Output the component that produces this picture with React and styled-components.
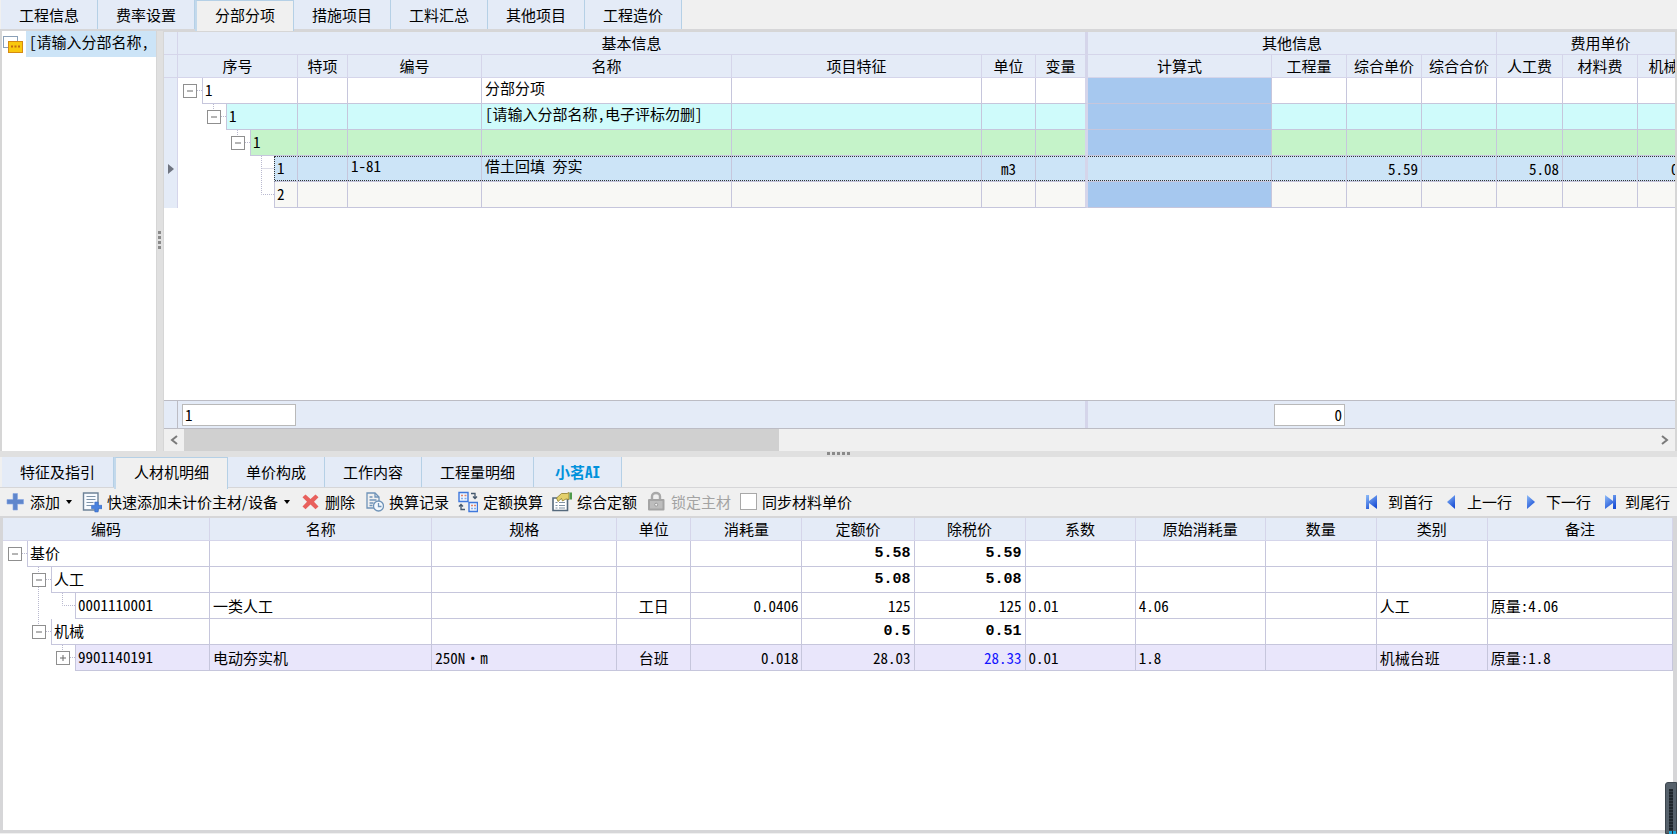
import React, { useState } from "react";
import styled, { createGlobalStyle, css } from "styled-components";

const GlobalStyle = createGlobalStyle`
  * {
    box-sizing: border-box;
  }
  body {
    margin: 0;
    background: #f0f0f0;
    color: #000000;
    font-family: "Noto Sans CJK SC", "Liberation Sans", sans-serif;
    font-size: 15px;
    line-height: 20px;
    overflow: hidden;
  }
  button,
  input {
    font: inherit;
    color: inherit;
  }
`;

const Page = styled.div`
  display: flex;
  flex-direction: column;
  height: 100vh;
`;

/* ---------- tabs ---------- */

const TabBar = styled.div`
  display: flex;
  height: 31px;
  padding-left: ${(p) => (p.$indent ? "2px" : "1px")};
  border-bottom: ${(p) => (p.$indent ? "1px" : "2px")} solid #d6d6d8;
`;

const Tab = styled.button`
  padding: 0 18px;
  border: none;
  border-right: 1px solid #b5d0e6;
  background: #e4ebf7;
  white-space: nowrap;
  font-feature-settings: "hwid";
  ${(p) =>
    p.$active &&
    css`
      padding-bottom: 3px;
      border-left: 2px solid #c3d9ec;
      border-top: 1px solid #b5d0e6;
      background: #f0f0f0;
      margin-bottom: -2px;
    `}
  ${(p) =>
    p.$brand &&
    css`
      min-width: 88px;
      color: #0091dc;
      font-weight: bold;
    `}
`;

/* ---------- upper pane ---------- */

const UpperPane = styled.div`
  flex: 420 1 0;
  min-height: 0;
  display: flex;
`;

const SectionTree = styled.div`
  width: 157px;
  flex: none;
  background: #ffffff;
  border-left: 2px solid #d6d6d6;
  border-right: 1px solid #d6d6d6;
`;

const SectionItem = styled.div`
  display: flex;
  height: 26px;
`;

const SectionIcon = styled.svg`
  flex: none;
  width: 24px;
  height: 26px;
`;

const SectionLabel = styled.div`
  flex: 1;
  padding: 1px 0 0 3px;
  overflow: hidden;
  white-space: nowrap;
  background: #cce4f7;
  font-feature-settings: "hwid";
`;

const VSplitter = styled.div`
  flex: none;
  width: 6px;
  display: flex;
  align-items: center;
  justify-content: center;
  background: #e0e0e0;
`;

const HSplitter = styled.div`
  flex: none;
  height: 6px;
  display: flex;
  align-items: center;
  justify-content: center;
  background: #e0e0e0;
`;

const GridPane = styled.div`
  flex: 1;
  min-width: 0;
  display: flex;
  flex-direction: column;
  background: #ffffff;
  border: solid #d6d6d6;
  border-width: 1px 2px 0 1px;
`;

const GridScroll = styled.div`
  flex: 1;
  min-height: 0;
  overflow: hidden;
`;

const Table = styled.table`
  width: ${(p) => p.$width || "100%"};
  table-layout: fixed;
  border-collapse: separate;
  border-spacing: 0;
  font-feature-settings: "hwid";
`;

const Th = styled.th`
  height: 23px;
  padding: 0;
  border-right: 1px solid #d5d5ea;
  border-bottom: 1px solid #d5d5ea;
  background: #e4ebf7;
  font-weight: normal;
  overflow: hidden;
  white-space: nowrap;
  ${(p) => p.$frozen && "border-right: 3px solid #d5d5ea;"}
`;

const focusLines = css`
  background-image: repeating-linear-gradient(
      90deg,
      #333333 0 1px,
      transparent 1px 2px
    ),
    repeating-linear-gradient(90deg, #333333 0 1px, transparent 1px 2px);
  background-size: 100% 1px;
  background-position: top, bottom;
  background-repeat: no-repeat;
`;

const Td = styled.td`
  height: 26px;
  padding: 0 3px;
  border-right: 1px solid #c6c6dc;
  border-bottom: 1px solid #c6c6dc;
  background-color: ${(p) => p.$bg || "#ffffff"};
  text-align: ${(p) => p.$align || "left"};
  vertical-align: ${(p) => (p.$top ? "top" : "middle")};
  color: ${(p) => p.$color || "inherit"};
  overflow: hidden;
  white-space: nowrap;
  ${(p) =>
    p.$bold &&
    css`
      font-family: "Liberation Mono", monospace;
      font-weight: bold;
    `}
  ${(p) => p.$frozen && "border-right: 3px solid #d5d5ea;"}
  ${(p) => p.$focused && focusLines}
`;

const Indicator = styled.td`
  padding: 0;
  text-align: center;
  line-height: 0;
  background: #e4ebf7;
  border-right: 1px solid #d5d5ea;
`;

const TreeTd = styled.td`
  height: 26px;
  padding: 0;
`;

const TreeRow = styled.div`
  display: flex;
  height: 26px;
`;

const TreeValue = styled.div`
  flex: 1;
  padding: 2px 2px 0;
  background-color: ${(p) => p.$bg || "#ffffff"};
  border: solid #c6c6dc;
  border-width: 0 1px 1px 1px;
  ${(p) => p.$focused && "border-left: 1px dotted #333333;"}
  ${(p) => p.$focused && focusLines}
`;

const Toggle = styled.button`
  flex: none;
  width: 24px;
  height: 26px;
  padding: 0;
  border: none;
  background: none;
  line-height: 0;
`;

const GuideSvg = styled.svg`
  flex: none;
  width: 24px;
  height: 26px;
`;

const FooterBar = styled.div`
  flex: none;
  display: flex;
  height: 29px;
  background: #e4ebf7;
  border-top: 1px solid #bcbcc4;
  border-bottom: 1px solid #bcbcc4;
`;

const FooterMark = styled.div`
  flex: none;
  width: 14px;
  border-right: 1px solid #bcbcc4;
`;

const FooterFixed = styled.div`
  flex: none;
  width: 910px;
  padding: 3px 4px;
  border-right: 3px solid #d5d5ea;
`;

const FooterRest = styled.div`
  flex: 1;
  padding: 3px 0 3px 186px;
`;

const FooterInput = styled.input`
  display: block;
  width: ${(p) => p.$width};
  height: 22px;
  padding: 0 2px 2px;
  border: 1px solid #b9b9b9;
  background: #ffffff;
  text-align: ${(p) => p.$align || "left"};
  font-feature-settings: "hwid";
`;

const ScrollBar = styled.div`
  flex: none;
  display: flex;
  height: 22px;
  background: #f0f0f0;
`;

const ScrollArrow = styled.button`
  flex: none;
  width: 20px;
  padding: 0;
  border: none;
  background: none;
  line-height: 0;
`;

const ScrollTrack = styled.div`
  flex: 1;
`;

const ScrollThumb = styled.div`
  width: calc(100% * 595 / 1471);
  height: 100%;
  background: #d0d0d0;
`;

/* ---------- lower pane ---------- */

const LowerPane = styled.div`
  flex: 377 1 0;
  min-height: 0;
  display: flex;
  flex-direction: column;
`;

const ToolBar = styled.div`
  flex: none;
  display: flex;
  align-items: center;
  gap: 9px;
  height: 28px;
  padding: 0 7px 1px 5px;
  white-space: nowrap;
`;

const ToolButton = styled.button`
  display: flex;
  align-items: center;
  gap: 5px;
  padding: 0;
  border: none;
  background: none;
  &:disabled {
    color: #a3a3a3;
  }
`;

const ToolIcon = styled.svg`
  flex: none;
  width: 20px;
  height: 22px;
`;

const CheckLabel = styled.label`
  display: flex;
  align-items: center;
  gap: 5px;
`;

const CheckBox = styled.input`
  appearance: none;
  width: 17px;
  height: 17px;
  margin: 0;
  border: 1px solid #a8a8a8;
  background: #ffffff;
  &:checked {
    background: #3f73d8;
  }
`;

const Navigator = styled.div`
  display: flex;
  gap: 10px;
  margin-left: auto;
`;

const NavButton = styled.button`
  display: flex;
  align-items: center;
  gap: 8px;
  padding: 0;
  border: none;
  background: none;
`;

const DetailPane = styled.div`
  flex: 1;
  min-height: 0;
  overflow: hidden;
  margin-bottom: 1px;
  background: #ffffff;
  border: solid #d6d6d8;
  border-width: 2px 4px 3px 3px;
`;

const FloatingWidget = styled.div`
  position: fixed;
  right: 0;
  bottom: 0;
  width: 12px;
  height: 52px;
  padding: 6px 3px 0;
  border-radius: 3px 0 0 0;
  background: #56616b;
  border: 1px solid #3d464e;
`;

const WidgetSlot = styled.div`
  height: 45px;
  background: repeating-linear-gradient(#1f262c 0 2px, #333c44 2px 3px);
  border-bottom: 3px dotted #22a7d8;
`;

/* ---------- icons ---------- */

const Dots = ({ vertical }) => (
  <svg width={vertical ? 4 : 24} height={vertical ? 20 : 4} fill="#8a8a8a">
    {[0, 1, 2, 3, 4].slice(vertical ? 1 : 0).map((n) => (
      <rect
        key={n}
        x={vertical ? 0 : n * 5}
        y={vertical ? (n - 1) * 5 : 0}
        width="3"
        height="3"
      />
    ))}
  </svg>
);

const Guide = ({ type }) => (
  <GuideSvg
    viewBox="0 0 24 26"
    fill="none"
    stroke="#b9b9cf"
    strokeDasharray="1 1"
    aria-hidden="true"
  >
    {type === "line" && <path d="M11.5 0V26" />}
    {type === "tee" && <path d="M11.5 0V26M11.5 12.5H24" />}
    {type === "elbow" && <path d="M11.5 0V12.5H24" />}
  </GuideSvg>
);

const ToggleIcon = ({ type }) => (
  <svg width="24" height="26" viewBox="0 0 24 26" fill="none">
    <g stroke="#b9b9cf" strokeDasharray="1 1">
      <path d="M19 12.5H24" />
      {type !== "root" && <path d="M11.5 0V6" />}
      {type === "open-more" && <path d="M11.5 20V26" />}
    </g>
    <rect x="5.5" y="6.5" width="13" height="13" fill="#fff" stroke="#8f8f8f" />
    <path d="M9 13H15" stroke="#6a6a6a" />
    {type === "closed" && <path d="M12 10V16" stroke="#6a6a6a" />}
  </svg>
);

const Caret = () => (
  <svg width="8" height="6" viewBox="0 0 8 6">
    <path d="M1 1H7L4 5Z" fill="#000" />
  </svg>
);

const AddIcon = () => (
  <ToolIcon viewBox="0 0 20 22">
    <path
      d="M8 2.5h4.500v6h6v4.500h-6v6H8v-6H2V8.500h6z"
      fill="#5f86cc"
      stroke="#86a6e2"
      strokeWidth="0.6"
    />
  </ToolIcon>
);

const QuickAddIcon = () => (
  <ToolIcon viewBox="0 0 20 22">
    <path d="M1.500 2h14.500v17h-14.500z" fill="#f8fbff" stroke="#6d8298" strokeWidth="1.400" />
    <path
      d="M4.500 5.5h9M4.500 8.5h9M4.500 11.5h7M4.500 14.5h5"
      stroke="#7e93a8"
      strokeWidth="1.200"
    />
    <path
      d="M12.800 11h3.400v3.300H20v3.400h-3.800V21h-3.400v-3.300H9.500v-3.400h3.300z"
      fill="#4a82de"
      stroke="#2f62bd"
      strokeWidth="0.500"
    />
  </ToolIcon>
);

const DeleteIcon = () => (
  <ToolIcon viewBox="0 0 20 22">
    <path
      d="M5.500 3.500 10.500 8 15.500 3.500l3 2.800-4.500 4.400 4.500 4.700-3 2.800L10.500 13.500 5.500 18.200l-3-2.800 4.500-4.700L2.500 6.300z"
      fill="#e8605c"
    />
  </ToolIcon>
);

const RecordIcon = () => (
  <ToolIcon viewBox="0 0 20 22" fill="none" stroke="#6f93b8" strokeWidth="1.3">
    <path d="M10 17H3V2h8l4 4v5" />
    <path d="M11 2v4h4M5.500 6h3M5.500 9h7M5.500 12h4M5.500 14.500h3" />
    <circle cx="14.500" cy="15" r="5" fill="#f3f8fd" />
    <path d="M14.500 12v3.500h3" />
  </ToolIcon>
);

const ConvertIcon = () => (
  <ToolIcon viewBox="0 0 20 22" fill="none">
    <path
      d="M1 1.500h9v9H1zM11 11.500h8.500v9H11z"
      fill="#eef5ff"
      stroke="#3f78dc"
      strokeWidth="1.400"
    />
    <path
      d="M3 4.500h2M6.500 4.500h2M13 14.500h2M16 14.500h2"
      stroke="#e2856a"
      strokeWidth="1.300"
    />
    <path
      d="M3 7.500h2M6.500 7.500h2M13 17.500h2M16 17.500h2"
      stroke="#86aee8"
      strokeWidth="1.300"
    />
    <path
      d="M13 2.500h4v5M15 5.500l2 2 2-2M7 18.500H3V13.500M1 15.500l2-2 2 2"
      stroke="#44586e"
      strokeWidth="1.300"
    />
  </ToolIcon>
);

const QuotaIcon = () => (
  <ToolIcon viewBox="0 0 20 22">
    <path
      d="M1 7h14.500v12.500H1z"
      fill="#fff"
      stroke="#55697c"
      strokeWidth="1.600"
    />
    <path
      d="M3.500 11.500h2M7 11.500h6M3.500 14.500h2M7 14.500h6M3.500 17h2M7 17h6"
      stroke="#8193a5"
    />
    <path
      d="M4.500 7 9.500 2.500h5.500l2-1v7l-3-.5-3.500 2-1-2.500-3.500 3z"
      fill="#e3d06b"
      stroke="#8d7b2c"
      strokeWidth="0.800"
    />
    <path d="M17.500 1.500H20v7h-2.500z" fill="#4f9a4c" />
  </ToolIcon>
);

const LockIcon = () => (
  <ToolIcon viewBox="0 0 20 22">
    <path
      d="M6 9V5.500a4 3.500 0 0 1 8 0V9"
      fill="none"
      stroke="#a9a9a9"
      strokeWidth="2.400"
    />
    <rect x="2" y="8" width="16.500" height="11.500" rx="1" fill="#a4a4a4" />
    <rect x="4" y="10" width="12.500" height="7.500" fill="#bdbdbd" />
    <circle cx="10.200" cy="13.700" r="1.500" fill="#f3f3f3" stroke="#999" />
  </ToolIcon>
);

const NavIcon = ({ dir, bar }) => (
  <svg width="16" height="16" viewBox="0 0 16 16">
    <defs>
      <linearGradient id={`nav-${dir}-${bar}`} x1="0" y1="0" x2="0.600" y2="1">
        <stop offset="0" stopColor="#8fbdf8" />
        <stop offset="1" stopColor="#1c50d6" />
      </linearGradient>
    </defs>
    <g fill={`url(#nav-${dir}-${bar})`}>
      {dir === "left" && !bar && <path d="M12 1V15L4 8Z" />}
      {dir === "right" && !bar && <path d="M5 1V15L13 8Z" />}
      {dir === "left" && bar && <path d="M2 1H5V7L13 1V15L5 9V15H2Z" />}
      {dir === "right" && bar && <path d="M15 1H12V7L4 1V15L12 9V15H15Z" />}
    </g>
  </svg>
);

/* ---------- data ---------- */

const mainTabs = [
  "工程信息",
  "费率设置",
  "分部分项",
  "措施项目",
  "工料汇总",
  "其他项目",
  "工程造价",
];

const detailTabs = [
  "特征及指引",
  "人材机明细",
  "单价构成",
  "工作内容",
  "工程量明细",
  "小茗AI",
];

const mainColumns = [
  { key: "no", title: "序号", width: 120 },
  { key: "mark", title: "特项", width: 50 },
  { key: "code", title: "编号", width: 134, top: true },
  { key: "name", title: "名称", width: 250, top: true },
  { key: "feature", title: "项目特征", width: 250 },
  { key: "unit", title: "单位", width: 54, align: "center" },
  { key: "variable", title: "变量", width: 52, frozen: true },
  { key: "formula", title: "计算式", width: 184 },
  { key: "quantity", title: "工程量", width: 75, align: "right" },
  { key: "price", title: "综合单价", width: 75, align: "right" },
  { key: "total", title: "综合合价", width: 75, align: "right" },
  { key: "labor", title: "人工费", width: 66, align: "right" },
  { key: "material", title: "材料费", width: 75, align: "right" },
  { key: "machine", title: "机械费", width: 67, align: "right" },
];

const mainRows = [
  { no: "1", toggle: "root", guides: [], name: "分部分项" },
  {
    no: "1",
    toggle: "open",
    guides: [""],
    name: "[请输入分部名称,电子评标勿删]",
    bg: "#cffbfb",
  },
  { no: "1", toggle: "open", guides: ["", ""], bg: "#c5f3c9" },
  {
    no: "1",
    guides: ["", "", "", "tee"],
    code: "1-81",
    name: "借土回填 夯实",
    unit: "m3",
    price: "5.59",
    labor: "5.08",
    machine: "0.51",
    bg: "#cce4f7",
    focused: true,
  },
  { no: "2", guides: ["", "", "", "elbow"], bg: "#f8f8f5" },
];

const detailColumns = [
  { key: "code", title: "编码", width: 207 },
  { key: "name", title: "名称", width: 222 },
  { key: "spec", title: "规格", width: 185 },
  { key: "unit", title: "单位", width: 74, align: "center" },
  { key: "usage", title: "消耗量", width: 111, align: "right" },
  { key: "quota", title: "定额价", width: 112, align: "right" },
  { key: "net", title: "除税价", width: 111, align: "right" },
  { key: "factor", title: "系数", width: 110 },
  { key: "origin", title: "原始消耗量", width: 130 },
  { key: "count", title: "数量", width: 111 },
  { key: "kind", title: "类别", width: 111 },
  { key: "note", title: "备注", width: 185 },
];

const detailRows = [
  {
    code: "基价",
    toggle: "root",
    guides: [],
    quota: "5.58",
    net: "5.59",
    bold: true,
  },
  {
    code: "人工",
    toggle: "open-more",
    guides: [""],
    quota: "5.08",
    net: "5.08",
    bold: true,
  },
  {
    code: "0001110001",
    guides: ["", "line", "elbow"],
    name: "一类人工",
    unit: "工日",
    usage: "0.0406",
    quota: "125",
    net: "125",
    factor: "0.01",
    origin: "4.06",
    kind: "人工",
    note: "原量:4.06",
  },
  {
    code: "机械",
    toggle: "open",
    guides: [""],
    quota: "0.5",
    net: "0.51",
    bold: true,
  },
  {
    code: "9901140191",
    toggle: "closed",
    guides: ["", ""],
    name: "电动夯实机",
    spec: "250N·m",
    unit: "台班",
    usage: "0.018",
    quota: "28.03",
    net: "28.33",
    netColor: "#1414ff",
    factor: "0.01",
    origin: "1.8",
    kind: "机械台班",
    note: "原量:1.8",
    bg: "#e9e6fb",
  },
];

const TreeCell = ({ row, value }) => (
  <TreeTd>
    <TreeRow>
      {row.guides.map((g, i) => (
        <Guide key={i} type={g} />
      ))}
      {row.toggle && (
        <Toggle aria-label={row.toggle === "closed" ? "展开" : "折叠"}>
          <ToggleIcon type={row.toggle} />
        </Toggle>
      )}
      <TreeValue $bg={row.bg} $focused={row.focused}>
        {value}
      </TreeValue>
    </TreeRow>
  </TreeTd>
);

const MainGrid = () => (
  <Table $width="1541px">
    <colgroup>
      <col style={{ width: 14 }} />
      {mainColumns.map((c) => (
        <col key={c.key} style={{ width: c.width }} />
      ))}
    </colgroup>
    <thead>
      <tr>
        <Th />
        <Th colSpan={7} $frozen>
          基本信息
        </Th>
        <Th colSpan={4}>其他信息</Th>
        <Th colSpan={3}>费用单价</Th>
      </tr>
      <tr>
        <Th />
        {mainColumns.map((c) => (
          <Th key={c.key} $frozen={c.frozen}>
            {c.title}
          </Th>
        ))}
      </tr>
    </thead>
    <tbody>
      {mainRows.map((row, i) => (
        <tr key={i}>
          <Indicator>
            {row.focused && (
              <svg width="6" height="10" viewBox="0 0 6 10">
                <path d="M0 0L6 5L0 10Z" fill="#6f7480" />
              </svg>
            )}
          </Indicator>
          <TreeCell row={row} value={row.no} />
          {mainColumns.slice(1).map((c) => (
            <Td
              key={c.key}
              $bg={c.key === "formula" && !row.focused ? "#a6c8ef" : row.bg}
              $align={c.align}
              $top={c.top}
              $frozen={c.frozen}
              $focused={row.focused}
            >
              {row[c.key]}
            </Td>
          ))}
        </tr>
      ))}
    </tbody>
  </Table>
);

const DetailGrid = () => (
  <Table>
    <colgroup>
      {detailColumns.map((c) => (
        <col key={c.key} style={{ width: c.width }} />
      ))}
    </colgroup>
    <thead>
      <tr>
        {detailColumns.map((c) => (
          <Th key={c.key}>{c.title}</Th>
        ))}
      </tr>
    </thead>
    <tbody>
      {detailRows.map((row) => (
        <tr key={row.code}>
          <TreeCell row={row} value={row.code} />
          {detailColumns.slice(1).map((c) => (
            <Td
              key={c.key}
              $bg={row.bg}
              $align={c.align}
              $bold={row.bold}
              $color={c.key === "net" ? row.netColor : undefined}
            >
              {row[c.key]}
            </Td>
          ))}
        </tr>
      ))}
    </tbody>
  </Table>
);

const App = () => {
  const [mainTab, setMainTab] = useState("分部分项");
  const [detailTab, setDetailTab] = useState("人材机明细");
  const [sync, setSync] = useState(false);

  return (
    <Page>
      <GlobalStyle />
      <TabBar role="tablist">
        {mainTabs.map((t) => (
          <Tab
            key={t}
            role="tab"
            aria-selected={t === mainTab}
            $active={t === mainTab}
            onClick={() => setMainTab(t)}
          >
            {t}
          </Tab>
        ))}
      </TabBar>

      <UpperPane>
        <SectionTree>
          <SectionItem>
            <SectionIcon viewBox="0 0 24 26">
              <rect x="1.500" y="5.500" width="14" height="11" fill="#fff" stroke="#8aa0b8" />
              <rect x="6.500" y="10.500" width="14" height="11" fill="#f9c80e" stroke="#d58a12" />
              <path d="M9 15.500h2M12.500 15.500h2M16 15.500h2" stroke="#c26a12" strokeWidth="2" />
            </SectionIcon>
            <SectionLabel>[请输入分部名称,</SectionLabel>
          </SectionItem>
        </SectionTree>
        <VSplitter>
          <Dots vertical />
        </VSplitter>
        <GridPane>
          <GridScroll>
            <MainGrid />
          </GridScroll>
          <FooterBar>
            <FooterMark />
            <FooterFixed>
              <FooterInput $width="114px" aria-label="序号合计" defaultValue="1" />
            </FooterFixed>
            <FooterRest>
              <FooterInput
                $width="71px"
                $align="right"
                aria-label="工程量合计"
                defaultValue="0"
              />
            </FooterRest>
          </FooterBar>
          <ScrollBar>
            <ScrollArrow aria-label="向左滚动">
              <svg width="8" height="10" fill="none" stroke="#7a7a7a" strokeWidth="2">
                <path d="M7 1L2 5L7 9" />
              </svg>
            </ScrollArrow>
            <ScrollTrack>
              <ScrollThumb />
            </ScrollTrack>
            <ScrollArrow aria-label="向右滚动">
              <svg width="8" height="10" fill="none" stroke="#7a7a7a" strokeWidth="2">
                <path d="M1 1L6 5L1 9" />
              </svg>
            </ScrollArrow>
          </ScrollBar>
        </GridPane>
      </UpperPane>

      <HSplitter>
        <Dots />
      </HSplitter>

      <LowerPane>
        <TabBar role="tablist" $indent>
          {detailTabs.map((t) => (
            <Tab
              key={t}
              role="tab"
              aria-selected={t === detailTab}
              $active={t === detailTab}
              $brand={t === "小茗AI"}
              onClick={() => setDetailTab(t)}
            >
              {t}
            </Tab>
          ))}
        </TabBar>
        <ToolBar>
          <ToolButton>
            <AddIcon />
            添加
            <Caret />
          </ToolButton>
          <ToolButton>
            <QuickAddIcon />
            快速添加未计价主材/设备
            <Caret />
          </ToolButton>
          <ToolButton>
            <DeleteIcon />
            删除
          </ToolButton>
          <ToolButton>
            <RecordIcon />
            换算记录
          </ToolButton>
          <ToolButton>
            <ConvertIcon />
            定额换算
          </ToolButton>
          <ToolButton>
            <QuotaIcon />
            综合定额
          </ToolButton>
          <ToolButton disabled>
            <LockIcon />
            锁定主材
          </ToolButton>
          <CheckLabel>
            <CheckBox
              type="checkbox"
              checked={sync}
              onChange={(e) => setSync(e.target.checked)}
            />
            同步材料单价
          </CheckLabel>
          <Navigator>
            <NavButton>
              <NavIcon dir="left" bar />
              到首行
            </NavButton>
            <NavButton>
              <NavIcon dir="left" />
              上一行
            </NavButton>
            <NavButton>
              <NavIcon dir="right" />
              下一行
            </NavButton>
            <NavButton>
              <NavIcon dir="right" bar />
              到尾行
            </NavButton>
          </Navigator>
        </ToolBar>
        <DetailPane>
          <DetailGrid />
        </DetailPane>
      </LowerPane>

      <FloatingWidget>
        <WidgetSlot />
      </FloatingWidget>
    </Page>
  );
};

export default App;
